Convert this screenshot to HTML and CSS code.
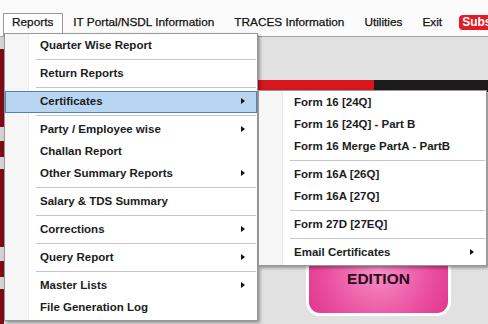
FILE: index.html
```html
<!DOCTYPE html>
<html lang="en">
<head>
    <meta charset="UTF-8">
    <title>TDS Reports Menu</title>
    <link rel="stylesheet" href="styles.css">
</head>
<body>
    <div class="menubar">
        <div class="menubar-item open">Reports</div>
        <div class="menubar-item">IT Portal/NSDL Information</div>
        <div class="menubar-item">TRACES Information</div>
        <div class="menubar-item">Utilities</div>
        <div class="menubar-item">Exit</div>
        <div class="badge">Subs</div>
    </div>

    <div class="workspace">
        <div class="edge"></div>
        <div class="canvas">
            <div class="banner">
                <div class="banner-red"></div>
                <div class="banner-dark"></div>
            </div>
            <div class="edition">EDITION</div>
        </div>
    </div>

    <!-- Reports dropdown -->
    <div class="menu main-menu">
        <div class="item">Quarter Wise Report</div>
        <div class="sep"></div>
        <div class="item">Return Reports</div>
        <div class="sep"></div>
        <div class="item sub active">Certificates</div>
        <div class="sep"></div>
        <div class="item sub">Party / Employee wise</div>
        <div class="item">Challan Report</div>
        <div class="item sub">Other Summary Reports</div>
        <div class="sep"></div>
        <div class="item">Salary &amp; TDS Summary</div>
        <div class="sep"></div>
        <div class="item sub">Corrections</div>
        <div class="sep"></div>
        <div class="item sub">Query Report</div>
        <div class="sep"></div>
        <div class="item sub">Master Lists</div>
        <div class="item">File Generation Log</div>
    </div>

    <!-- Certificates submenu -->
    <div class="menu sub-menu">
        <div class="item">Form 16 [24Q]</div>
        <div class="item">Form 16 [24Q] - Part B</div>
        <div class="item">Form 16 Merge PartA - PartB</div>
        <div class="sep"></div>
        <div class="item">Form 16A [26Q]</div>
        <div class="item">Form 16A [27Q]</div>
        <div class="sep"></div>
        <div class="item">Form 27D [27EQ]</div>
        <div class="sep"></div>
        <div class="item sub">Email Certificates</div>
    </div>
</body>
</html>
```

FILE: styles.css
```css
body {
    margin: 0;
    width: 488px;
    height: 324px;
    overflow: hidden;
    font-family: "Liberation Sans", Arial, sans-serif;
    background-color: #e1e1e1;
    position: relative;
}

/* top menu bar */
.menubar {
    display: flex;
    align-items: flex-end;
    height: 36px;
    padding-left: 3px;
    background-color: #fbfbfb;
    border-bottom: 1px solid #a3a3a3;
    white-space: nowrap;
    overflow: hidden;
}

.menubar-item {
    height: 23px;
    box-sizing: border-box;
    padding: 0 9px;
    border: 1px solid transparent;
    border-bottom: none;
    font-size: 11.8px;
    line-height: 17px;
    color: #111;
    -webkit-text-stroke: 0.25px #111;
}

.menubar-item.open {
    padding: 0 9px 0 8px;
    background-color: #fff;
    border-color: #9a9a9a;
}

.badge {
    align-self: flex-start;
    margin: 15px 0 0 7px;
    padding: 1px 6px 1px 3px;
    border-radius: 4px;
    background-color: #e31b23;
    color: #fff;
    font-weight: bold;
    font-size: 12px;
    line-height: 13px;
}

/* what lies behind the menus */
.workspace {
    display: flex;
    height: 287px;
}

.edge {
    width: 4px;
    background: repeating-linear-gradient(#d2d2d2 0 12px, #7d0c14 12px 90px, #d2d2d2 90px 104px, #7d0c14 104px 120px);
}

.canvas {
    flex: 1;
    display: flex;
    flex-direction: column;
}

.banner {
    display: flex;
    height: 12px;
    margin-top: 43px;
}

.banner-red {
    width: 370px;
    background-color: #d8161d;
}

.banner-dark {
    flex: 1;
    background-color: #1d1b1b;
}

.edition {
    width: 145px;
    height: 116px;
    margin: 108px 0 0 302px;
    display: flex;
    align-items: flex-end;
    justify-content: center;
    padding-bottom: 25px;
    box-sizing: border-box;
    border: 3px solid #fff;
    border-radius: 14px;
    background: radial-gradient(ellipse at 50% 62%, #f68ec6 0%, #ea4d9f 55%, #d82a83 100%);
    color: #2b0a1b;
    font-weight: bold;
    font-size: 15.5px;
    line-height: 18px;
}

/* dropdown menus */
.menu {
    position: absolute;
    box-sizing: border-box;
    padding: 1px 0;
    border: 1px solid #979797;
    background: linear-gradient(to right, #f6f6f6 0 23px, #ececec 23px 24px, #fff 24px);
    box-shadow: 2px 2px 3px rgba(0, 0, 0, 0.35);
}

.main-menu {
    left: 4px;
    top: 33px;
    width: 254px;
}

.sub-menu {
    left: 258px;
    top: 90px;
    width: 229px;
}

.item {
    display: flex;
    align-items: center;
    height: 22px;
    box-sizing: border-box;
    padding: 0 11px 2px 34px;
    border: 1px solid transparent;
    font-weight: bold;
    font-size: 11.5px;
    color: #1c1c1c;
    white-space: nowrap;
}

.item.sub::after {
    content: "";
    margin-left: auto;
    border-left: 4px solid #111;
    border-top: 3.5px solid transparent;
    border-bottom: 3.5px solid transparent;
}

.item.active {
    background-color: #b8d6f2;
    border-color: #4f82bb;
}

.sep {
    height: 6px;
    margin: 0 1px 0 31px;
    background: linear-gradient(transparent 2px, #c6c6c6 2px 3px, transparent 3px);
}
```
